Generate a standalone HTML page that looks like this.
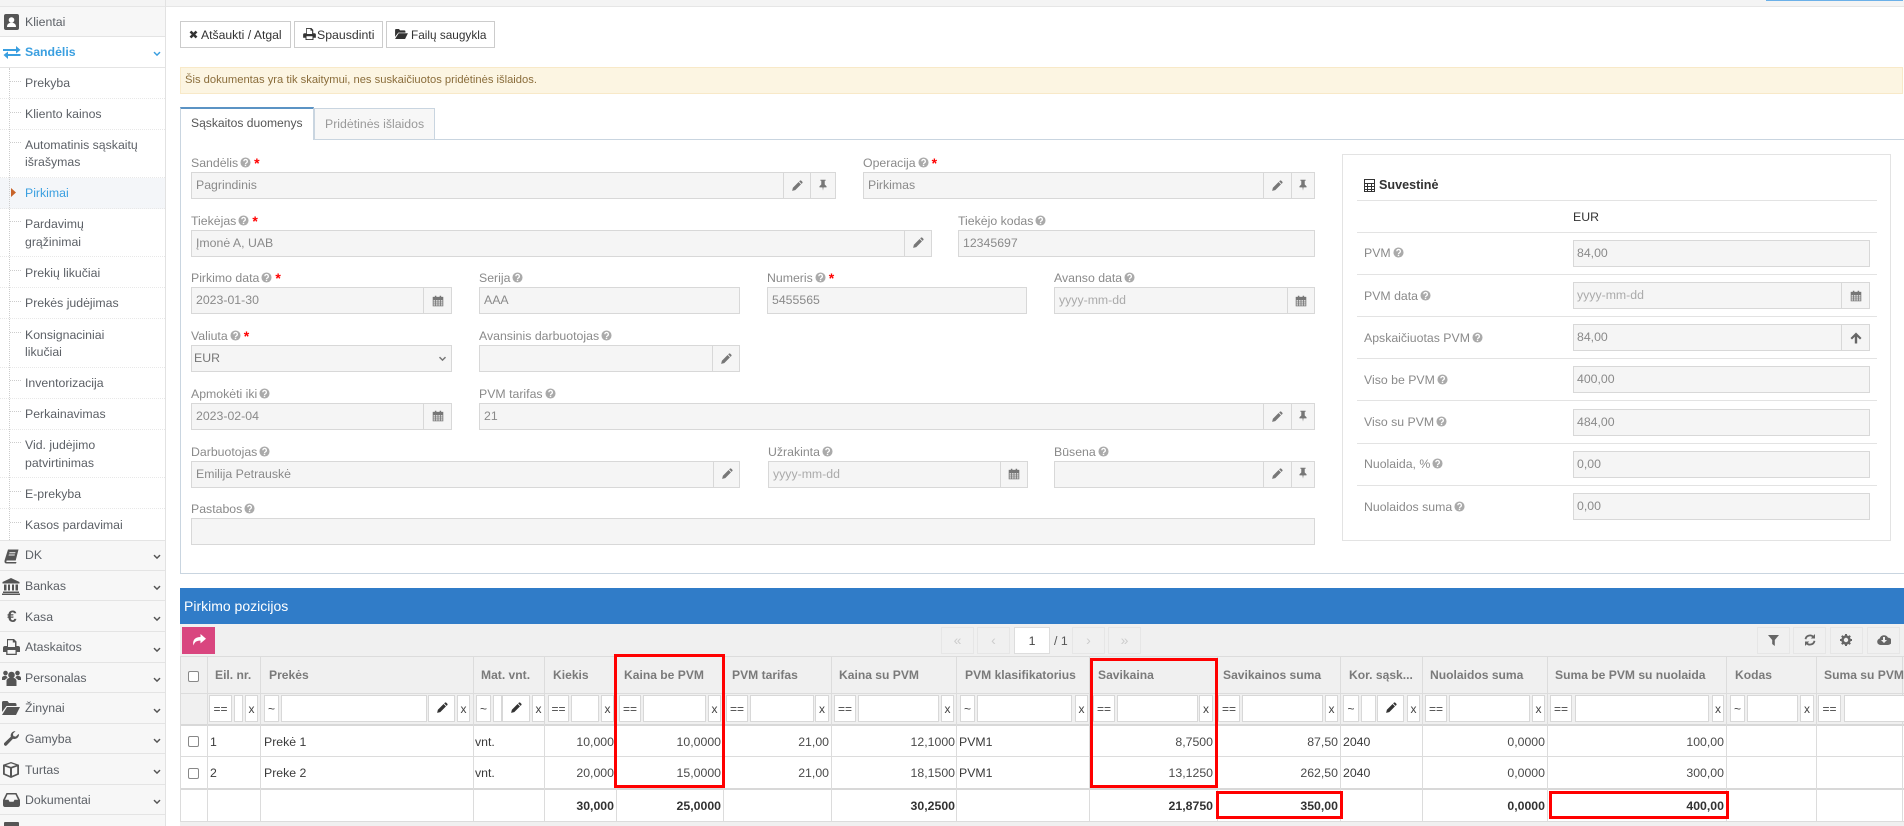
<!DOCTYPE html>
<html lang="lt"><head><meta charset="utf-8"><title>Pirkimai</title>
<style>
html,body{margin:0;padding:0;width:1904px;height:826px;overflow:hidden;background:#fff}
body{font:12.3px/16px "Liberation Sans",sans-serif;color:#555;position:relative}
div,svg,span.a{position:absolute;box-sizing:border-box}
.t{white-space:nowrap;height:16px}
.s{color:#5c6066;left:25px}
.r{height:1px;left:0;width:165px;background:#e4e4e4}
.top{left:0;width:165px;background:#f7f7f7;border-bottom:1px solid #e4e4e4}
.dot{left:0;width:165px;border-top:1px dotted #e8e8e8;height:0}
.h{left:10px;width:11px;border-top:1px dotted #ccc;height:0}
.b{background:#f5f5f5;border:1px solid #d8d8d8;height:27px}
.v{width:1px;height:27px;background:#d8d8d8}
.l{color:#8a8a8a;white-space:nowrap;height:16px}
.l svg{position:static;vertical-align:-1px;margin-left:2px}
.l i{color:#f00;font:bold 14px/10px "Liberation Sans",sans-serif;margin-left:3px;vertical-align:-1px}
.val{color:#8a8a8a;white-space:nowrap;height:16px}
.ph{color:#aaa}
.btn{background:#fff;border:1px solid #ccc;height:27px;top:21px}
.th{font-weight:bold;color:#7a7a7a;top:667px;white-space:nowrap;height:16px;font-size:12.1px}
.f{background:#fff;border:1px solid #d8d8d8;top:695px;height:27px;color:#444;font-size:12px;line-height:26px;text-align:center}
.cl{width:1px;background:#dcdcdc;top:656px;height:165px}
.n{white-space:nowrap;height:16px;color:#4a4a4a;text-align:right;width:100px}
.n2{white-space:nowrap;height:16px;color:#3a3a3a}
.bo{font-weight:bold;color:#333}
.cb{width:11px;height:11px;background:#fff;border:1px solid #888;border-radius:2px;left:188px}
.red{border:3px solid #f00;background:transparent}
.pg{background:#f0f0f0;border:1px solid #e6e6e6;top:627px;height:27px;width:33px;color:#ccc;text-align:center;line-height:25px;font-size:14px}
.sl{left:1357px;width:520px;height:1px;background:#e3e3e3}
.ic{color:#777}
</style></head><body>
<svg width="0" height="0" style="left:0;top:0">
<symbol id="pe" viewBox="0 0 16 16"><path fill="currentColor" d="M1.500 14.500l1-4.200 7.600-7.600 3.200 3.200-7.600 7.600zM10.900 1.900l1-1a1.200 1.200 0 0 1 1.700 0l1.500 1.500a1.200 1.200 0 0 1 0 1.700l-1 1z"/></symbol>
<symbol id="pi" viewBox="0 0 16 16"><path fill="currentColor" d="M4.500 1h7v1.300h-1.200v5l2.400 2.400v1.400H8.700L8 15.500l-.7-4.400H3.300v-1.400l2.400-2.400v-5H4.500z"/></symbol>
<symbol id="ca" viewBox="0 0 16 16"><g fill="none" stroke="currentColor" stroke-width="1.100"><rect x="1.500" y="3" width="13" height="11.500"/><path d="M1.500 6.500h13M1.500 9.200h13M1.500 11.900h13M4.700 6.500v8M8 6.500v8M11.300 6.500v8"/></g><path fill="currentColor" d="M1.500 3h13v3.500h-13zM3.800 1h2v3h-2zM10.200 1h2v3h-2z"/></symbol>
<symbol id="q" viewBox="0 0 12 12"><circle cx="6" cy="6" r="5.500" fill="#aaa"/><path d="M4.200 4.600a1.900 1.900 0 1 1 2.800 1.700c-.7.400-1 .7-1 1.400" fill="none" stroke="#fff" stroke-width="1.400"/><rect x="5.200" y="8.400" width="1.600" height="1.500" fill="#fff"/></symbol>
<symbol id="ch" viewBox="0 0 10 8"><path d="M1 1.500l4 4 4-4" fill="none" stroke="currentColor" stroke-width="2"/></symbol>
</svg>

<!-- top strip -->
<div style="left:0;top:0;width:1904px;height:6px;background:#f4f4f4"></div>
<div style="left:0;top:6px;width:1904px;height:1px;background:#e6e6e6"></div>
<div style="left:1766px;top:0;width:137px;height:1px;background:#6bb0e8"></div>

<!-- SIDEBAR -->
<div style="left:165px;top:0;width:1px;height:826px;background:#e2e2e2"></div>
<div class="top" style="top:7px;height:30px"></div>
<div class="r" style="top:67px"></div>
<div class="top" style="top:540px;height:31px;border-top:1px solid #e4e4e4"></div>
<div class="top" style="top:571px;height:30px"></div>
<div class="top" style="top:601px;height:31px"></div>
<div class="top" style="top:632px;height:31px"></div>
<div class="top" style="top:663px;height:30px"></div>
<div class="top" style="top:693px;height:31px"></div>
<div class="top" style="top:724px;height:30px"></div>
<div class="top" style="top:754px;height:31px"></div>
<div class="top" style="top:785px;height:30px"></div>
<div class="top" style="top:815px;height:11px;border-bottom:0"></div>
<div style="left:0;top:178px;width:165px;height:31px;background:#f4f6f9"></div>
<div style="left:9px;top:68px;width:0;height:472px;border-left:1px dotted #ccc"></div>

<div class="dot" style="top:98px"></div><div class="dot" style="top:129px"></div><div class="dot" style="top:177px"></div>
<div class="dot" style="top:208px"></div><div class="dot" style="top:256px"></div><div class="dot" style="top:287px"></div>
<div class="dot" style="top:318px"></div><div class="dot" style="top:367px"></div><div class="dot" style="top:398px"></div>
<div class="dot" style="top:429px"></div><div class="dot" style="top:477px"></div><div class="dot" style="top:508px"></div>
<div class="h" style="top:81px"></div><div class="h" style="top:112px"></div><div class="h" style="top:142px"></div><div class="h" style="top:221px"></div><div class="h" style="top:270px"></div><div class="h" style="top:301px"></div><div class="h" style="top:332px"></div><div class="h" style="top:380px"></div><div class="h" style="top:411px"></div><div class="h" style="top:442px"></div><div class="h" style="top:491px"></div><div class="h" style="top:522px"></div>

<div class="t s" style="top:14px">Klientai</div>
<div class="t s" style="top:44px;color:#3a9fe0;font-weight:bold">Sandėlis</div>
<div class="t s" style="top:75px">Prekyba</div>
<div class="t s" style="top:106px">Kliento kainos</div>
<div class="t s" style="top:137px">Automatinis sąskaitų</div>
<div class="t s" style="top:154px">išrašymas</div>
<div class="t s" style="top:185px;color:#3a9fe0">Pirkimai</div>
<div class="t s" style="top:216px">Pardavimų</div>
<div class="t s" style="top:234px">grąžinimai</div>
<div class="t s" style="top:265px">Prekių likučiai</div>
<div class="t s" style="top:295px">Prekės judėjimas</div>
<div class="t s" style="top:327px">Konsignaciniai</div>
<div class="t s" style="top:344px">likučiai</div>
<div class="t s" style="top:375px">Inventorizacija</div>
<div class="t s" style="top:406px">Perkainavimas</div>
<div class="t s" style="top:437px">Vid. judėjimo</div>
<div class="t s" style="top:455px">patvirtinimas</div>
<div class="t s" style="top:486px">E-prekyba</div>
<div class="t s" style="top:517px">Kasos pardavimai</div>
<div class="t s" style="top:547px">DK</div>
<div class="t s" style="top:578px">Bankas</div>
<div class="t s" style="top:609px">Kasa</div>
<div class="t s" style="top:639px">Ataskaitos</div>
<div class="t s" style="top:670px">Personalas</div>
<div class="t s" style="top:700px">Žinynai</div>
<div class="t s" style="top:731px">Gamyba</div>
<div class="t s" style="top:762px">Turtas</div>
<div class="t s" style="top:792px">Dokumentai</div>

<svg style="left:11px;top:188px" width="5" height="9"><path d="M0 0l5 4.500-5 4.500z" fill="#c8642a"/></svg>
<!-- chevrons -->
<svg style="left:153px;top:51px;color:#3a9fe0" width="8" height="6"><use href="#ch"/></svg>
<svg style="left:153px;top:554px;color:#555" width="8" height="6"><use href="#ch"/></svg>
<svg style="left:153px;top:585px;color:#555" width="8" height="6"><use href="#ch"/></svg>
<svg style="left:153px;top:616px;color:#555" width="8" height="6"><use href="#ch"/></svg>
<svg style="left:153px;top:647px;color:#555" width="8" height="6"><use href="#ch"/></svg>
<svg style="left:153px;top:677px;color:#555" width="8" height="6"><use href="#ch"/></svg>
<svg style="left:153px;top:708px;color:#555" width="8" height="6"><use href="#ch"/></svg>
<svg style="left:153px;top:738px;color:#555" width="8" height="6"><use href="#ch"/></svg>
<svg style="left:153px;top:769px;color:#555" width="8" height="6"><use href="#ch"/></svg>
<svg style="left:153px;top:799px;color:#555" width="8" height="6"><use href="#ch"/></svg>
<!-- sidebar icons -->
<svg style="left:3px;top:13px" width="17" height="18" viewBox="0 0 17 18"><rect x="1" y="1" width="15" height="16" rx="2" fill="#555"/><circle cx="8.500" cy="7" r="2.800" fill="#fff"/><path d="M4 14c0-3 2-4.200 4.500-4.200S13 11 13 14z" fill="#fff"/></svg>
<svg style="left:3px;top:46px" width="18" height="13" viewBox="0 0 18 13"><path fill="#3a9fe0" d="M0 3h13V0l4.500 3.900L13 7.500V5H0zM17.500 8H5V5.500L.5 9 5 13v-3h12.500z"/></svg>
<svg style="left:4px;top:549px" width="15" height="15" viewBox="0 0 15 15"><path fill="#555" d="M4 .5h10.500l-2.800 11H3c-1 0-1 1.500 0 1.500h9.500l-.5 1.500H2.500C.6 14.500.2 13 .7 11zM5.500 3.200l-.3 1h6l.3-1zM4.900 5.500l-.3 1h6l.3-1z" fill-rule="evenodd"/></svg>
<svg style="left:2px;top:578px" width="18" height="17" viewBox="0 0 18 17"><path fill="#555" d="M9 0l8.500 4v1.500H.5V4zM2 6.500h2.500v6H2zM6 6.500h2v6H6zM10 6.500h2v6h-2zM13.500 6.500H16v6h-2.500zM1 13.500h16V15H1zM0 15.500h18V17H0z"/></svg>
<div class="t" style="left:4px;top:607px;font:bold 17px/20px 'Liberation Sans',sans-serif;height:20px;width:16px;text-align:center;color:#555">€</div>
<svg style="left:3px;top:639px" width="17" height="16" viewBox="0 0 17 16"><path fill="#555" fill-rule="evenodd" d="M4 0h7l2.500 2.500V7h1.500A2 2 0 0 1 17 9v4h-3.200v3H3.200v-3H0V9a2 2 0 0 1 2-2h2zM5 1.200V8h7V3.500h-2.200V1.200zM4.500 11v3.800h8V11z"/></svg>
<svg style="left:2px;top:670px" width="19" height="16" viewBox="0 0 19 16"><g fill="#555"><circle cx="9.500" cy="5" r="3.300"/><circle cx="3.500" cy="3" r="2.300"/><circle cx="15.500" cy="3" r="2.300"/><path d="M4.500 16V11c0-2 2-3.500 5-3.500s5 1.500 5 3.500v5zM0 10V8c0-1.500 1.500-2.300 3.500-2.300.4 0 .8 0 1 .2.200 1 .7 1.600 1.300 2-1.600.6-2.600 1.600-2.800 2.100zM19 10V8c0-1.500-1.500-2.300-3.500-2.300-.4 0-.8 0-1 .2-.2 1-.7 1.600-1.300 2 1.600.6 2.600 1.600 2.800 2.100z"/></g></svg>
<svg style="left:2px;top:701px" width="18" height="14" viewBox="0 0 18 14"><path fill="#555" d="M0 1.500C0 .6.600 0 1.500 0h4L7 2h6c.8 0 1.500.6 1.500 1.500V5H4.500L0 11zM5 6h13l-4 8H0z"/></svg>
<svg style="left:4px;top:731px" width="15" height="15" viewBox="0 0 15 15"><path fill="#555" d="M15 3.500a4.500 4.500 0 0 1-6 4.200L2.800 14.300a1.700 1.700 0 0 1-2.400-2.400L6.800 5.700A4.500 4.500 0 0 1 11.500.1L8.900 2.700l.5 2.400 2.400.5L14.500 3z"/></svg>
<svg style="left:3px;top:762px" width="16" height="16" viewBox="0 0 16 16"><path fill="#555" fill-rule="evenodd" d="M8 0l8 2.800v9.700L8 16l-8-3.500V2.800zM3 3.100l5 1.800 5-1.800L8 1.400zM1.800 4.500v7l5.200 2.300V6.400zM14.200 4.500L9 6.400v7.400l5.200-2.300z"/></svg>
<svg style="left:3px;top:792px" width="17" height="15" viewBox="0 0 17 15"><path fill="#555" fill-rule="evenodd" d="M3.500 1h10L17 8v5c0 1-.7 2-2 2H2c-1.300 0-2-1-2-2V8zM4.500 2.500L2 7.800h3.500l1 2h4l1-2H15l-2.500-5.300z"/></svg>
<svg style="left:4px;top:822px" width="15" height="4" viewBox="0 0 15 4"><path fill="#555" d="M1 0h13a1 1 0 0 1 1 1v3H0V1a1 1 0 0 1 1-1z"/></svg>

<!-- toolbar buttons -->
<div class="btn" style="left:180px;width:111px"></div>
<div class="btn" style="left:294px;width:89px"></div>
<div class="btn" style="left:386px;width:109px"></div>
<svg style="left:189px;top:30px" width="9" height="9" viewBox="0 0 9 9"><path d="M1.500 1.500l6 6M7.500 1.500l-6 6" stroke="#333" stroke-width="2.600" fill="none"/></svg>
<svg style="left:303px;top:28px" width="13" height="12" viewBox="0 0 17 16"><path fill="#333" fill-rule="evenodd" d="M4 0h7l2.500 2.500V7h1.500A2 2 0 0 1 17 9v4h-3.200v3H3.200v-3H0V9a2 2 0 0 1 2-2h2zM5 1.200V8h7V3.500h-2.200V1.200zM4.500 11v3.800h8V11z"/></svg>
<svg style="left:395px;top:29px" width="13" height="10" viewBox="0 0 18 14"><path fill="#333" d="M0 1.500C0 .6.600 0 1.500 0h4L7 2h6c.8 0 1.500.6 1.500 1.500V5H4.500L0 11zM5 6h13l-4 8H0z"/></svg>
<div class="t" style="left:201px;top:27px;color:#333;font-size:12.2px">Atšaukti / Atgal</div>
<div class="t" style="left:317px;top:27px;color:#333">Spausdinti</div>
<div class="t" style="left:411px;top:27px;color:#333;font-size:11.8px">Failų saugykla</div>

<!-- alert -->
<div style="left:180px;top:67px;width:1723px;height:27px;background:#fcf5e2;border:1px solid #f8e9c8"></div>
<div class="t" style="left:185px;top:72px;color:#8a6d3b;font-size:11.2px">Šis dokumentas yra tik skaitymui, nes suskaičiuotos pridėtinės išlaidos.</div>

<!-- tabs and panel -->
<div style="left:180px;top:139px;width:1724px;height:435px;border:1px solid #c9d5e0;border-right:0"></div>
<div style="left:314px;top:108px;width:121px;height:32px;background:#f7f7f7;border:1px solid #c9d5e0;border-bottom:1px solid #c9d5e0"></div>
<div style="left:180px;top:107px;width:134px;height:33px;background:#fff;border:1px solid #c9d5e0;border-top:2px solid #5b93c4;border-bottom:0"></div>
<div class="t" style="left:191px;top:115px;color:#555;font-size:12.1px">Sąskaitos duomenys</div>
<div class="t" style="left:325px;top:116px;color:#999">Pridėtinės išlaidos</div>

<!-- form labels -->
<div class="a l" style="left:191px;top:155px">Sandėlis<svg width="11" height="11"><use href="#q"/></svg><i>*</i></div>
<div class="a l" style="left:863px;top:155px">Operacija<svg width="11" height="11"><use href="#q"/></svg><i>*</i></div>
<div class="a l" style="left:191px;top:213px">Tiekėjas<svg width="11" height="11"><use href="#q"/></svg><i>*</i></div>
<div class="a l" style="left:958px;top:213px">Tiekėjo kodas<svg width="11" height="11"><use href="#q"/></svg></div>
<div class="a l" style="left:191px;top:270px">Pirkimo data<svg width="11" height="11"><use href="#q"/></svg><i>*</i></div>
<div class="a l" style="left:479px;top:270px">Serija<svg width="11" height="11"><use href="#q"/></svg></div>
<div class="a l" style="left:767px;top:270px">Numeris<svg width="11" height="11"><use href="#q"/></svg><i>*</i></div>
<div class="a l" style="left:1054px;top:270px">Avanso data<svg width="11" height="11"><use href="#q"/></svg></div>
<div class="a l" style="left:191px;top:328px">Valiuta<svg width="11" height="11"><use href="#q"/></svg><i>*</i></div>
<div class="a l" style="left:479px;top:328px">Avansinis darbuotojas<svg width="11" height="11"><use href="#q"/></svg></div>
<div class="a l" style="left:191px;top:386px">Apmokėti iki<svg width="11" height="11"><use href="#q"/></svg></div>
<div class="a l" style="left:479px;top:386px">PVM tarifas<svg width="11" height="11"><use href="#q"/></svg></div>
<div class="a l" style="left:191px;top:444px">Darbuotojas<svg width="11" height="11"><use href="#q"/></svg></div>
<div class="a l" style="left:768px;top:444px">Užrakinta<svg width="11" height="11"><use href="#q"/></svg></div>
<div class="a l" style="left:1054px;top:444px">Būsena<svg width="11" height="11"><use href="#q"/></svg></div>
<div class="a l" style="left:191px;top:501px">Pastabos<svg width="11" height="11"><use href="#q"/></svg></div>

<!-- form boxes -->
<div class="b" style="left:191px;top:172px;width:645px"></div><div class="v" style="left:783px;top:172px"></div><div class="v" style="left:810px;top:172px"></div>
<div class="b" style="left:863px;top:172px;width:452px"></div><div class="v" style="left:1263px;top:172px"></div><div class="v" style="left:1291px;top:172px"></div>
<div class="b" style="left:191px;top:230px;width:741px"></div><div class="v" style="left:904px;top:230px"></div>
<div class="b" style="left:958px;top:230px;width:357px"></div>
<div class="b" style="left:191px;top:287px;width:261px"></div><div class="v" style="left:423px;top:287px"></div>
<div class="b" style="left:479px;top:287px;width:261px"></div>
<div class="b" style="left:767px;top:287px;width:260px"></div>
<div class="b" style="left:1054px;top:287px;width:261px"></div><div class="v" style="left:1287px;top:287px"></div>
<div class="b" style="left:191px;top:345px;width:261px"></div>
<div class="b" style="left:479px;top:345px;width:261px"></div><div class="v" style="left:712px;top:345px"></div>
<div class="b" style="left:191px;top:403px;width:261px"></div><div class="v" style="left:423px;top:403px"></div>
<div class="b" style="left:479px;top:403px;width:836px"></div><div class="v" style="left:1263px;top:403px"></div><div class="v" style="left:1291px;top:403px"></div>
<div class="b" style="left:191px;top:461px;width:549px"></div><div class="v" style="left:713px;top:461px"></div>
<div class="b" style="left:768px;top:461px;width:260px"></div><div class="v" style="left:1000px;top:461px"></div>
<div class="b" style="left:1054px;top:461px;width:261px"></div><div class="v" style="left:1263px;top:461px"></div><div class="v" style="left:1291px;top:461px"></div>
<div class="b" style="left:191px;top:518px;width:1124px"></div>

<!-- form values -->
<div class="val" style="left:196px;top:177px">Pagrindinis</div>
<div class="val" style="left:868px;top:177px">Pirkimas</div>
<div class="val" style="left:196px;top:235px">Įmonė A, UAB</div>
<div class="val" style="left:963px;top:235px">12345697</div>
<div class="val" style="left:196px;top:292px">2023-01-30</div>
<div class="val" style="left:484px;top:292px">AAA</div>
<div class="val" style="left:772px;top:292px">5455565</div>
<div class="val ph" style="left:1059px;top:292px">yyyy-mm-dd</div>
<div class="val" style="left:194px;top:350px;color:#777">EUR</div>
<div class="val" style="left:196px;top:408px">2023-02-04</div>
<div class="val" style="left:484px;top:408px">21</div>
<div class="val" style="left:196px;top:466px">Emilija Petrauskė</div>
<div class="val ph" style="left:773px;top:466px">yyyy-mm-dd</div>
<svg style="left:438px;top:356px;color:#777" width="9" height="6"><use href="#ch"/></svg>

<!-- form icons -->
<svg class="ic" style="left:791px;top:180px" width="12" height="12"><use href="#pe"/></svg>
<svg class="ic" style="left:817px;top:179px" width="12" height="12"><use href="#pi"/></svg>
<svg class="ic" style="left:1271px;top:180px" width="12" height="12"><use href="#pe"/></svg>
<svg class="ic" style="left:1297px;top:179px" width="12" height="12"><use href="#pi"/></svg>
<svg class="ic" style="left:912px;top:237px" width="12" height="12"><use href="#pe"/></svg>
<svg class="ic" style="left:432px;top:295px" width="12" height="12"><use href="#ca"/></svg>
<svg class="ic" style="left:1295px;top:295px" width="12" height="12"><use href="#ca"/></svg>
<svg class="ic" style="left:720px;top:353px" width="12" height="12"><use href="#pe"/></svg>
<svg class="ic" style="left:432px;top:410px" width="12" height="12"><use href="#ca"/></svg>
<svg class="ic" style="left:1271px;top:411px" width="12" height="12"><use href="#pe"/></svg>
<svg class="ic" style="left:1297px;top:410px" width="12" height="12"><use href="#pi"/></svg>
<svg class="ic" style="left:721px;top:468px" width="12" height="12"><use href="#pe"/></svg>
<svg class="ic" style="left:1008px;top:468px" width="12" height="12"><use href="#ca"/></svg>
<svg class="ic" style="left:1271px;top:468px" width="12" height="12"><use href="#pe"/></svg>
<svg class="ic" style="left:1297px;top:467px" width="12" height="12"><use href="#pi"/></svg>

<!-- summary -->
<div style="left:1342px;top:154px;width:549px;height:387px;border:1px solid #e3e3e3"></div>
<div class="sl" style="top:200px"></div><div class="sl" style="top:232px"></div><div class="sl" style="top:274px"></div><div class="sl" style="top:316px"></div><div class="sl" style="top:358px"></div><div class="sl" style="top:400px"></div><div class="sl" style="top:443px"></div><div class="sl" style="top:485px"></div>
<svg style="left:1364px;top:179px" width="11" height="13" viewBox="0 0 11 13"><path fill="#333" fill-rule="evenodd" d="M0 0h11v13H0zM1 1v3h9V1zM1 5v2h2V5zM4 5v2h3V5zM8 5v2h2V5zM1 8v2h2V8zM4 8v2h3V8zM8 8v2h2V8zM1 11v1h2v-1zM4 11v1h3v-1zM8 11v1h2v-1z"/></svg>
<div class="t" style="left:1379px;top:177px;font-weight:bold;color:#333;font-size:12.6px">Suvestinė</div>
<div class="t" style="left:1573px;top:209px;color:#333">EUR</div>
<div class="a l" style="left:1364px;top:245px">PVM<svg width="11" height="11"><use href="#q"/></svg></div>
<div class="a l" style="left:1364px;top:288px">PVM data<svg width="11" height="11"><use href="#q"/></svg></div>
<div class="a l" style="left:1364px;top:330px">Apskaičiuotas PVM<svg width="11" height="11"><use href="#q"/></svg></div>
<div class="a l" style="left:1364px;top:372px">Viso be PVM<svg width="11" height="11"><use href="#q"/></svg></div>
<div class="a l" style="left:1364px;top:414px">Viso su PVM<svg width="11" height="11"><use href="#q"/></svg></div>
<div class="a l" style="left:1364px;top:456px">Nuolaida, %<svg width="11" height="11"><use href="#q"/></svg></div>
<div class="a l" style="left:1364px;top:499px">Nuolaidos suma<svg width="11" height="11"><use href="#q"/></svg></div>
<div class="b" style="left:1573px;top:240px;width:297px"></div>
<div class="b" style="left:1573px;top:282px;width:297px"></div><div class="v" style="left:1841px;top:282px"></div>
<div class="b" style="left:1573px;top:324px;width:297px"></div><div class="v" style="left:1841px;top:324px"></div>
<div class="b" style="left:1573px;top:366px;width:297px"></div>
<div class="b" style="left:1573px;top:409px;width:297px"></div>
<div class="b" style="left:1573px;top:451px;width:297px"></div>
<div class="b" style="left:1573px;top:493px;width:297px"></div>
<div class="val" style="left:1577px;top:245px">84,00</div>
<div class="val ph" style="left:1577px;top:287px">yyyy-mm-dd</div>
<div class="val" style="left:1577px;top:329px">84,00</div>
<div class="val" style="left:1577px;top:371px">400,00</div>
<div class="val" style="left:1577px;top:414px">484,00</div>
<div class="val" style="left:1577px;top:456px">0,00</div>
<div class="val" style="left:1577px;top:498px">0,00</div>
<svg class="ic" style="left:1850px;top:290px" width="12" height="12"><use href="#ca"/></svg>
<svg style="left:1850px;top:332px" width="12" height="12" viewBox="0 0 12 12"><path fill="#666" d="M6 .5L11.500 6 10 7.500 7.200 4.800V11.500H4.800V4.800L2 7.500.5 6z"/></svg>

<!-- GRID -->
<div style="left:180px;top:588px;width:1724px;height:36px;background:#307cc8"></div>
<div class="t" style="left:184px;top:598px;color:#fff;font-size:14px">Pirkimo pozicijos</div>
<div style="left:180px;top:624px;width:1724px;height:202px;background:#f0f0f0"></div>
<div style="left:182px;top:627px;width:33px;height:27px;background:#d9467f"></div>
<svg style="left:192px;top:634px" width="14" height="12" viewBox="0 0 14 12"><path fill="#fff" d="M8.500 0L14 4.700 8.500 9.400V6.600C4.500 6.600 2.500 7.800 1.500 11.500.2 7 2.500 3 8.500 3z"/></svg>

<div class="pg" style="left:941px">«</div>
<div class="pg" style="left:977px">‹</div>
<div class="pg" style="left:1014px;width:36px;background:#fff;color:#444;font-size:12.3px;border-color:#ddd;line-height:26px">1</div>
<div class="t" style="left:1054px;top:633px;color:#555">/ 1</div>
<div class="pg" style="left:1072px">›</div>
<div class="pg" style="left:1108px">»</div>
<div class="pg" style="left:1757px"></div><div class="pg" style="left:1793px"></div><div class="pg" style="left:1830px"></div><div class="pg" style="left:1867px"></div>
<svg style="left:1768px;top:635px" width="11" height="11" viewBox="0 0 11 11"><path fill="#666" d="M0 0h11L6.800 5v6L4.200 9V5z"/></svg>
<svg style="left:1804px;top:634px" width="12" height="12" viewBox="0 0 12 12"><g fill="none" stroke="#666" stroke-width="1.800"><path d="M1.500 5.200A4.600 4.600 0 0 1 9.500 3"/><path d="M10.500 6.800A4.600 4.600 0 0 1 2.500 9"/></g><path fill="#666" d="M11 0v4.500H6.800zM1 12V7.500h4.200z"/></svg>
<svg style="left:1840px;top:634px" width="12" height="12" viewBox="0 0 12 12"><circle cx="6" cy="6" r="3.500" fill="none" stroke="#666" stroke-width="2.600"/><path stroke="#666" stroke-width="2" d="M6 0v2.500M6 9.500V12M0 6h2.500M9.500 6H12M1.800 1.800l1.800 1.800M8.400 8.400l1.800 1.800M10.200 1.800L8.400 3.600M3.600 8.400l-1.800 1.800"/></svg>
<svg style="left:1877px;top:634px" width="14" height="11" viewBox="0 0 14 11"><path fill="#666" fill-rule="evenodd" d="M3.500 11A3.300 3.300 0 0 1 2.700 4.500 4.500 4.500 0 0 1 11 3.600 3.700 3.700 0 0 1 11 11zM6 3v3H4l3 3 3-3H8V3z"/></svg>

<!-- rows bg -->
<div style="left:180px;top:656px;width:1724px;height:1px;background:#dcdcdc"></div>
<div style="left:180px;top:693px;width:1724px;height:1px;background:#dcdcdc"></div>
<div style="left:180px;top:724px;width:1724px;height:2px;background:#d8d8d8"></div>
<div style="left:180px;top:726px;width:1724px;height:62px;background:#fff"></div>
<div style="left:180px;top:756px;width:1724px;height:1px;background:#dcdcdc"></div>
<div style="left:180px;top:788px;width:1724px;height:2px;background:#d8d8d8"></div>
<div style="left:180px;top:790px;width:1724px;height:31px;background:#fff"></div>
<div style="left:180px;top:821px;width:1724px;height:1px;background:#dcdcdc"></div>

<!-- col lines -->
<div class="cl" style="left:180px"></div><div class="cl" style="left:207px"></div><div class="cl" style="left:260px"></div><div class="cl" style="left:473px"></div><div class="cl" style="left:544px"></div><div class="cl" style="left:616px"></div><div class="cl" style="left:723px"></div><div class="cl" style="left:831px"></div><div class="cl" style="left:956px"></div><div class="cl" style="left:1089px"></div><div class="cl" style="left:1217px"></div><div class="cl" style="left:1340px"></div><div class="cl" style="left:1422px"></div><div class="cl" style="left:1547px"></div><div class="cl" style="left:1726px"></div><div class="cl" style="left:1816px"></div><div class="cl" style="left:1902px"></div>

<!-- headers -->
<div class="cb" style="top:671px"></div><div class="cb" style="top:736px"></div><div class="cb" style="top:768px"></div>
<div class="th" style="left:215px">Eil. nr.</div>
<div class="th" style="left:269px">Prekės</div>
<div class="th" style="left:481px">Mat. vnt.</div>
<div class="th" style="left:553px">Kiekis</div>
<div class="th" style="left:624px">Kaina be PVM</div>
<div class="th" style="left:732px">PVM tarifas</div>
<div class="th" style="left:839px">Kaina su PVM</div>
<div class="th" style="left:965px">PVM klasifikatorius</div>
<div class="th" style="left:1098px">Savikaina</div>
<div class="th" style="left:1223px">Savikainos suma</div>
<div class="th" style="left:1349px">Kor. sąsk...</div>
<div class="th" style="left:1430px">Nuolaidos suma</div>
<div class="th" style="left:1555px">Suma be PVM su nuolaida</div>
<div class="th" style="left:1735px">Kodas</div>
<div class="th" style="left:1824px">Suma su PVM</div>

<!-- filters -->
<div class="f" style="left:209px;width:23px">==</div><div class="f" style="left:234px;width:9px"></div><div class="f" style="left:245px;width:13px">x</div>
<div class="f" style="left:264px;width:15px">~</div><div class="f" style="left:281px;width:146px"></div><div class="f" style="left:428px;width:27px"></div><div class="f" style="left:457px;width:13px">x</div>
<div class="f" style="left:476px;width:15px">~</div><div class="f" style="left:493px;width:9px"></div><div class="f" style="left:502px;width:28px"></div><div class="f" style="left:532px;width:13px">x</div>
<div class="f" style="left:548px;width:21px">==</div><div class="f" style="left:571px;width:28px"></div><div class="f" style="left:601px;width:13px">x</div>
<div class="f" style="left:619px;width:22px">==</div><div class="f" style="left:643px;width:63px"></div><div class="f" style="left:708px;width:13px">x</div>
<div class="f" style="left:726px;width:22px">==</div><div class="f" style="left:750px;width:64px"></div><div class="f" style="left:815px;width:14px">x</div>
<div class="f" style="left:834px;width:22px">==</div><div class="f" style="left:858px;width:81px"></div><div class="f" style="left:941px;width:13px">x</div>
<div class="f" style="left:960px;width:15px">~</div><div class="f" style="left:977px;width:95px"></div><div class="f" style="left:1075px;width:13px">x</div>
<div class="f" style="left:1093px;width:22px">==</div><div class="f" style="left:1117px;width:81px"></div><div class="f" style="left:1199px;width:14px">x</div>
<div class="f" style="left:1218px;width:22px">==</div><div class="f" style="left:1242px;width:81px"></div><div class="f" style="left:1325px;width:13px">x</div>
<div class="f" style="left:1343px;width:16px">~</div><div class="f" style="left:1361px;width:15px"></div><div class="f" style="left:1377px;width:27px"></div><div class="f" style="left:1407px;width:13px">x</div>
<div class="f" style="left:1425px;width:22px">==</div><div class="f" style="left:1449px;width:81px"></div><div class="f" style="left:1532px;width:13px">x</div>
<div class="f" style="left:1550px;width:22px">==</div><div class="f" style="left:1575px;width:134px"></div><div class="f" style="left:1712px;width:12px">x</div>
<div class="f" style="left:1730px;width:15px">~</div><div class="f" style="left:1747px;width:51px"></div><div class="f" style="left:1800px;width:14px">x</div>
<div class="f" style="left:1818px;width:23px">==</div><div class="f" style="left:1844px;width:60px;border-right:0"></div>
<svg style="left:436px;top:702px;color:#333" width="12" height="12"><use href="#pe"/></svg>
<svg style="left:510px;top:702px;color:#333" width="12" height="12"><use href="#pe"/></svg>
<svg style="left:1385px;top:702px;color:#333" width="12" height="12"><use href="#pe"/></svg>

<!-- row 1 -->
<div class="n2" style="left:210px;top:734px">1</div>
<div class="n2" style="left:264px;top:734px">Prekė 1</div>
<div class="n2" style="left:475px;top:734px">vnt.</div>
<div class="n" style="left:514px;top:734px">10,000</div>
<div class="n" style="left:621px;top:734px">10,0000</div>
<div class="n" style="left:729px;top:734px">21,00</div>
<div class="n" style="left:855px;top:734px">12,1000</div>
<div class="n2" style="left:959px;top:734px">PVM1</div>
<div class="n" style="left:1113px;top:734px">8,7500</div>
<div class="n" style="left:1238px;top:734px">87,50</div>
<div class="n2" style="left:1343px;top:734px">2040</div>
<div class="n" style="left:1445px;top:734px">0,0000</div>
<div class="n" style="left:1624px;top:734px">100,00</div>
<!-- row 2 -->
<div class="n2" style="left:210px;top:765px">2</div>
<div class="n2" style="left:264px;top:765px">Preke 2</div>
<div class="n2" style="left:475px;top:765px">vnt.</div>
<div class="n" style="left:514px;top:765px">20,000</div>
<div class="n" style="left:621px;top:765px">15,0000</div>
<div class="n" style="left:729px;top:765px">21,00</div>
<div class="n" style="left:855px;top:765px">18,1500</div>
<div class="n2" style="left:959px;top:765px">PVM1</div>
<div class="n" style="left:1113px;top:765px">13,1250</div>
<div class="n" style="left:1238px;top:765px">262,50</div>
<div class="n2" style="left:1343px;top:765px">2040</div>
<div class="n" style="left:1445px;top:765px">0,0000</div>
<div class="n" style="left:1624px;top:765px">300,00</div>
<!-- totals -->
<div class="n bo" style="left:514px;top:798px">30,000</div>
<div class="n bo" style="left:621px;top:798px">25,0000</div>
<div class="n bo" style="left:855px;top:798px">30,2500</div>
<div class="n bo" style="left:1113px;top:798px">21,8750</div>
<div class="n bo" style="left:1238px;top:798px">350,00</div>
<div class="n bo" style="left:1445px;top:798px">0,0000</div>
<div class="n bo" style="left:1624px;top:798px">400,00</div>

<!-- red highlights -->
<div class="red" style="left:614px;top:654px;width:111px;height:134px"></div>
<div class="red" style="left:1090px;top:658px;width:128px;height:130px"></div>
<div class="red" style="left:1216px;top:791px;width:127px;height:28px"></div>
<div class="red" style="left:1549px;top:791px;width:180px;height:28px"></div>
</body></html>
